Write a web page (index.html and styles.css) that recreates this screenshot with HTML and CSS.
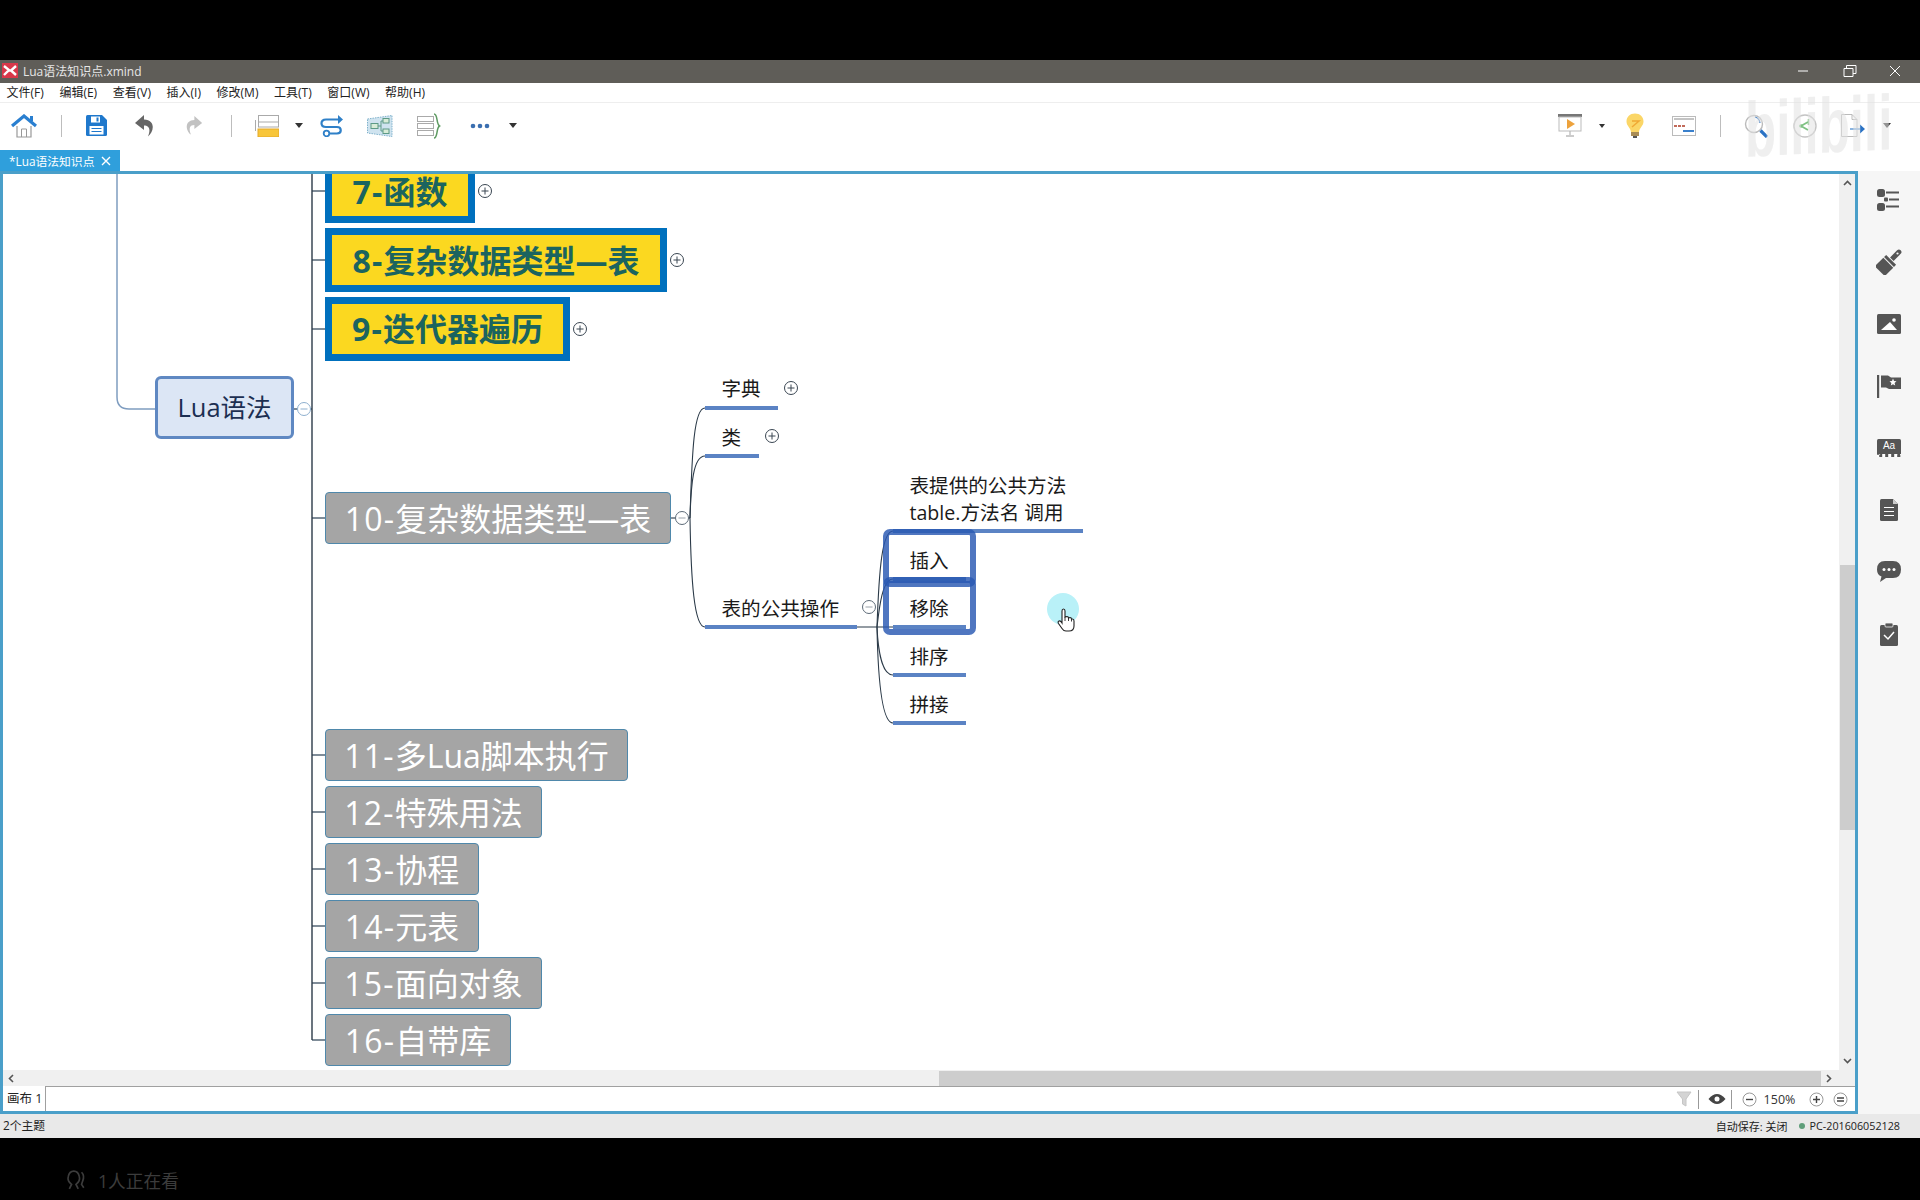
FILE: index.html
```html
<!DOCTYPE html>
<html lang="zh-CN">
<head>
    <meta charset="UTF-8">
    <title>Lua语法知识点.xmind</title>
    <link rel="stylesheet" href="styles.css">
</head>
<body>
    <div class="black-top"></div>
    <div class="window">
        <div class="titlebar">
            <svg class="app-logo" width="16" height="15" viewBox="0 0 16 15"><rect width="16" height="15" fill="#d9384a"/><path d="M2 3 L7 7 L2 12 M14 3 L9 7.5 L14 12 M5 7.5 H11" fill="none" stroke="#fff" stroke-width="2.4"/></svg>
            <span class="title-text">Lua语法知识点.xmind</span>
            <div class="win-controls">
                <svg width="46" height="20" viewBox="0 0 46 20"><path d="M18 10 H28" stroke="#fff" stroke-width="1"/></svg>
                <svg width="46" height="20" viewBox="0 0 46 20"><path d="M18 7.5 H27 V15.5 H18 Z M20.500 7.500 V4.500 H30 V12.500 H27" fill="none" stroke="#fff" stroke-width="1"/></svg>
                <svg width="46" height="20" viewBox="0 0 46 20"><path d="M18 5 L28 15 M28 5 L18 15" stroke="#fff" stroke-width="1"/></svg>
            </div>
        </div>
        <div class="menubar">
            <span>文件(F)</span><span>编辑(E)</span><span>查看(V)</span><span>插入(I)</span><span>修改(M)</span><span>工具(T)</span><span>窗口(W)</span><span>帮助(H)</span>
        </div>
        <div class="toolbar">
            <div class="tool w48"><svg width="26" height="24" viewBox="0 0 26 24"><path d="M6 12 V23 H20 V12" fill="#fff" stroke="#999" stroke-width="1.2"/><path d="M10.500 23 V15 H15.500 V23" fill="none" stroke="#999"/><path d="M1 12 L13 2 L25 12" fill="none" stroke="#2a7fd0" stroke-width="3.2"/><rect x="19" y="2" width="3" height="5" fill="#2a7fd0"/></svg></div>
            <div class="tool-sep sep-a"></div>
            <div class="tool w48 save"><svg width="21" height="21" viewBox="0 0 21 21"><path d="M0 1.500 Q0 0 1.500 0 H16 L21 5 V19.500 Q21 21 19.500 21 H1.500 Q0 21 0 19.500 Z" fill="#1f78cc"/><rect x="5" y="1.500" width="9" height="6" fill="#fff"/><rect x="10.500" y="2.500" width="2" height="4" fill="#1f78cc"/><rect x="3.500" y="11" width="14" height="8.500" fill="#fff"/><path d="M5.500 13.500 H15.500 M5.500 16.500 H15.500" stroke="#1f78cc" stroke-width="1.200"/></svg></div>
            <div class="tool w49"><svg width="20" height="22" viewBox="0 0 20 22"><path d="M9 0 L0 8 L9 15 V10.500 C14 10.500 16 14 13 21.500 C19 17 21 5 9 4.500 Z" fill="#666"/></svg></div>
            <div class="tool w49"><svg width="19" height="19" viewBox="0 0 20 22"><path d="M11 0 L20 8 L11 15 V10.500 C6 10.500 4 14 7 21.500 C1 17 -1 5 11 4.500 Z" fill="#c2c2c2"/></svg></div>
            <div class="tool-sep sep-b"></div>
            <div class="tool w48 topic"><svg width="24" height="22" viewBox="0 0 24 22"><rect x="3.500" y="0.500" width="20" height="10" fill="#fff" stroke="#aaa"/><path d="M0.500 5 V16" stroke="#aaa"/><rect x="3.500" y="7" width="20" height="5" fill="#fff" stroke="#aaa"/><rect x="3" y="14" width="21" height="8" fill="#f8c63a" stroke="#e4a92a"/></svg></div>
            <div class="tool w16"><span class="caret"></span></div>
            <div class="tool w50"><svg width="24" height="22" viewBox="0 0 24 22"><path d="M21 4.500 H6 C0 4.500 0 12 6 12 H17 C22 12 22 18.500 17 18.500 H9" fill="none" stroke="#2f80c8" stroke-width="2.200"/><path d="M18 0 L23 4.500 L18 9 Z" fill="#2f80c8"/><circle cx="6.500" cy="18.500" r="2.800" fill="#fff" stroke="#2f80c8" stroke-width="1.800"/></svg></div>
            <div class="tool w46"><svg width="26" height="22" viewBox="0 0 26 22"><path d="M0.500 4 L25 0.500 V21.500 L0.500 18 Z" fill="#cfe3ef" stroke="#7fb2cc" stroke-dasharray="1.500 1"/><rect x="4" y="8.500" width="7" height="5" fill="#d8ecd8" stroke="#5d9a86"/><rect x="16" y="3.500" width="6" height="4.500" fill="#d8ecd8" stroke="#5d9a86"/><rect x="16" y="14" width="6" height="4.500" fill="#d8ecd8" stroke="#5d9a86"/><path d="M11 11 H14 M14 6 V16 M14 6 H16 M14 16 H16" stroke="#5d9a86" fill="none"/></svg></div>
            <div class="tool w52"><svg width="24" height="26" viewBox="0 0 24 26"><rect x="0.500" y="3.500" width="16" height="5" fill="#fff" stroke="#aaa"/><rect x="0.500" y="10.500" width="16" height="5" fill="#fff" stroke="#aaa"/><rect x="0.500" y="17.500" width="16" height="5" fill="#fff" stroke="#aaa"/><path d="M17 1 C21 1 19 11 22.500 13 C19 15 21 25 17 25" fill="none" stroke="#5e9b62" stroke-width="1.500"/></svg></div>
            <div class="tool w50"><svg width="20" height="6" viewBox="0 0 20 6"><circle cx="3" cy="3" r="2.300" fill="#3b6fb0"/><circle cx="10" cy="3" r="2.300" fill="#3b6fb0"/><circle cx="17" cy="3" r="2.300" fill="#3b6fb0"/></svg></div>
            <div class="tool w16"><span class="caret"></span></div>

            <div class="toolbar-right">
                <div class="tool w46"><svg width="24" height="23" viewBox="0 0 24 23"><rect y="0" width="24" height="3" fill="#777"/><rect x="1" y="3" width="22" height="14" fill="#fff" stroke="#bbb"/><path d="M9 5 L17 10 L9 15 Z" fill="#eda23c"/><path d="M12 17 V21 M8 22 H16" stroke="#bbb" stroke-width="1.300"/></svg></div>
                <div class="tool w18"><span class="caret small"></span></div>
                <div class="tool w48"><svg width="18" height="25" viewBox="0 0 18 25"><path d="M9 0.500 C14 0.500 17.500 4 17.500 8.500 C17.500 13 13.500 14.500 13 19 H5 C4.500 14.500 0.500 13 0.500 8.500 C0.500 4 4 0.500 9 0.500 Z" fill="#fbd667"/><path d="M6 8 H13 L6 14" fill="none" stroke="#f0a934" stroke-width="1.500"/><rect x="5" y="19" width="8" height="4" fill="#a98c55"/><rect x="7" y="23" width="4" height="2" fill="#555"/></svg></div>
                <div class="tool w50"><svg width="24" height="20" viewBox="0 0 24 20"><rect x="0.500" y="0.500" width="23" height="19" fill="#fff" stroke="#bbb"/><path d="M2 3 H22" stroke="#888"/><path d="M2 10 H13" stroke="#c26a5a" stroke-width="2" stroke-dasharray="3 1"/><path d="M11 15 H22" stroke="#3a80cc" stroke-width="2"/></svg></div>
                <div class="tool-sep sep-c"></div>
                <div class="tool w54"><svg width="24" height="24" viewBox="0 0 24 24"><circle cx="10" cy="10" r="8.500" fill="#fff" stroke="#bbb" stroke-width="1.400"/><path d="M11 3 A7 7 0 0 1 16 9" fill="none" stroke="#4c86c8" stroke-width="1.200"/><path d="M16.500 16.500 L23 23" stroke="#2a72c4" stroke-width="3.200"/></svg></div>
                <div class="tool w44"><svg width="24" height="24" viewBox="0 0 24 24"><circle cx="12" cy="12" r="11" fill="#fff" stroke="#c4c4c4" stroke-width="1.400"/><path d="M15 8 L8 12 L15 16" fill="none" stroke="#7fc183" stroke-width="1.800"/><circle cx="8" cy="12" r="1.800" fill="#7fc183"/><path d="M15.500 5 V11" stroke="#7fc183" stroke-width="1.500"/></svg></div>
                <div class="tool w52"><svg width="24" height="23" viewBox="0 0 24 23"><path d="M0.500 0.500 H11 L16 5.500 V22.500 H0.500 Z" fill="#fff" stroke="#bbb"/><path d="M11 0.500 V5.500 H16" fill="none" stroke="#bbb"/><path d="M9 15 H19" stroke="#8ab4e0" stroke-width="2"/><path d="M19 10.500 L24 15 L19 19.500 Z" fill="#2a72c4"/></svg></div>
                <div class="tool w16"><span class="caret"></span></div>
            </div>
        </div>
        <div class="tabbar">
            <div class="tab">
                <span>*Lua语法知识点</span>
                <svg width="10" height="10" viewBox="0 0 10 10"><path d="M1 1 L9 9 M9 1 L1 9" stroke="#fff" stroke-width="1.400"/></svg>
            </div>
        </div>

        <div class="editor">
            <div class="frame">
                <div class="frame-main">
                    <div class="canvas">
                        <div class="map">
                            <svg class="links" width="1920" height="1200" viewBox="0 0 1920 1200">
                                <g fill="none" stroke="#7f9dc0" stroke-width="1.500">
                                    <path d="M117 174 V397 Q117 409 129 409 H155"/>
                                </g>
                                <g fill="none" stroke="#7f8c98" stroke-width="2">
                                    <path d="M312 191 H326 M312 260 H326 M312 329 H326 M312 518 H326 M312 755 H326 M312 812 H326 M312 869 H326 M312 926 H326 M312 983 H326 M312 1040 H326"/>
                                    <path d="M294 409 H312"/>
                                </g>
                                <path d="M312 174 V1040" stroke="#2b3a48" stroke-width="1.400"/>
                                <g fill="none" stroke="#2b3a48" stroke-width="1.100">
                                    <path d="M671 518 H690"/>
                                    <path d="M690 518 C692 450 694 408 705 408"/>
                                    <path d="M690 518 C691 485 693 456 705 456"/>
                                    <path d="M690 518 C691 580 694 627 705 627"/>
                                    <path d="M857 627 H893"/>
                                    <path d="M877 627 C879 570 882 531 893 531"/>
                                    <path d="M877 627 C879 610 882 579 893 579"/>
                                    <path d="M877 627 C878 650 882 675 893 675"/>
                                    <path d="M877 627 C878 680 882 723 893 723"/>
                                </g>
                            </svg>

                            <div class="branch hot n7"><span class="num">7-</span>函数</div>
                            <div class="branch hot n8"><span class="num">8-</span>复杂数据类型—表</div>
                            <div class="branch hot n9"><span class="num">9-</span>迭代器遍历</div>
                            <div class="branch grey n10"><span class="num">10-</span>复杂数据类型—表</div>
                            <div class="branch grey n11"><span class="num">11-</span>多Lua脚本执行</div>
                            <div class="branch grey n12"><span class="num">12-</span>特殊用法</div>
                            <div class="branch grey n13"><span class="num">13-</span>协程</div>
                            <div class="branch grey n14"><span class="num">14-</span>元表</div>
                            <div class="branch grey n15"><span class="num">15-</span>面向对象</div>
                            <div class="branch grey n16"><span class="num">16-</span>自带库</div>

                            <div class="root">Lua语法</div>

                            <div class="leaf l-dict">字典</div>
                            <div class="leaf l-class">类</div>
                            <div class="leaf l-ops">表的公共操作</div>
                            <div class="leaf l-table">表提供的公共方法<br>table.方法名 调用</div>
                            <div class="leaf l-ins">插入</div>
                            <div class="leaf l-del">移除</div>
                            <div class="leaf l-sort">排序</div>
                            <div class="leaf l-join">拼接</div>

                            <div class="sel sel-ins"></div>
                            <div class="sel sel-del"></div>

                            <svg class="toggle t7" width="16" height="16" viewBox="0 0 16 16"><circle cx="8" cy="8" r="6.500" fill="#fff" stroke="#3a4652"/><path d="M4.500 8 H11.500 M8 4.500 V11.500" stroke="#3a4652"/></svg>
                            <svg class="toggle t8" width="16" height="16" viewBox="0 0 16 16"><circle cx="8" cy="8" r="6.500" fill="#fff" stroke="#3a4652"/><path d="M4.500 8 H11.500 M8 4.500 V11.500" stroke="#3a4652"/></svg>
                            <svg class="toggle t9" width="16" height="16" viewBox="0 0 16 16"><circle cx="8" cy="8" r="6.500" fill="#fff" stroke="#3a4652"/><path d="M4.500 8 H11.500 M8 4.500 V11.500" stroke="#3a4652"/></svg>
                            <svg class="toggle t-dict" width="16" height="16" viewBox="0 0 16 16"><circle cx="8" cy="8" r="6.500" fill="#fff" stroke="#3a4652"/><path d="M4.500 8 H11.500 M8 4.500 V11.500" stroke="#3a4652"/></svg>
                            <svg class="toggle t-class" width="16" height="16" viewBox="0 0 16 16"><circle cx="8" cy="8" r="6.500" fill="#fff" stroke="#3a4652"/><path d="M4.500 8 H11.500 M8 4.500 V11.500" stroke="#3a4652"/></svg>
                            <svg class="toggle t-root" width="16" height="16" viewBox="0 0 16 16"><circle cx="8" cy="8" r="6.500" fill="#fff" stroke="#8fb0cf"/><path d="M4.500 8 H11.500" stroke="#8fb0cf"/></svg>
                            <svg class="toggle t10" width="16" height="16" viewBox="0 0 16 16"><circle cx="8" cy="8" r="6.500" fill="#fff" stroke="#5d6b78"/><path d="M4.500 8 H11.500" stroke="#9aa3ab"/></svg>
                            <svg class="toggle t-ops" width="16" height="16" viewBox="0 0 16 16"><circle cx="8" cy="8" r="6.500" fill="#fff" stroke="#5d6b78"/><path d="M4.500 8 H11.500" stroke="#9aa3ab"/></svg>

                            <div class="click-dot"></div>
                            <svg class="hand" width="18" height="24" viewBox="0 0 18 24"><path d="M5 12 V3 Q5 1 6.500 1 Q8 1 8 3 V9 L10 8.500 Q11.500 8.500 11.500 10 L13 9.500 Q14.500 9.500 14.500 11 L15.500 11 Q17 11 17 13 V18 Q17 23 12 23 H9 Q6.500 23 5 20.500 L1.500 15.500 Q0.500 13.500 2 13 Q3.500 12.500 5 15 Z" fill="#fff" stroke="#222" stroke-width="1.100"/><path d="M8 9 V13 M11.500 10 V13 M14.500 11 V13.500" stroke="#222" stroke-width="0.900"/></svg>
                        </div>
                    </div>
                    <div class="vscroll">
                        <div class="arrow"><svg width="9" height="6" viewBox="0 0 9 6"><path d="M1 5 L4.500 1.500 L8 5" fill="none" stroke="#555" stroke-width="1.600"/></svg></div>
                        <div class="vthumb"></div>
                        <div class="arrow arrow-end"><svg width="9" height="6" viewBox="0 0 9 6"><path d="M1 1 L4.500 4.500 L8 1" fill="none" stroke="#555" stroke-width="1.600"/></svg></div>
                    </div>
                </div>
                <div class="hscroll">
                    <div class="arrow-h"><svg width="6" height="9" viewBox="0 0 6 9"><path d="M5 1 L1.500 4.500 L5 8" fill="none" stroke="#555" stroke-width="1.600"/></svg></div>
                    <div class="hthumb"></div>
                    <div class="arrow-h"><svg width="6" height="9" viewBox="0 0 6 9"><path d="M1 1 L4.500 4.500 L1 8" fill="none" stroke="#555" stroke-width="1.600"/></svg></div>
                </div>
                <div class="sheetbar">
                    <div class="sheet-tab">画布 1</div>
                    <div class="sheet-rest">
                        <div class="ctl w28"><svg width="16" height="16" viewBox="0 0 16 16"><path d="M1 1 H15 L10 8 V15 L6.500 13 V8 Z" fill="#d4d4d4" stroke="#c6c6c6"/></svg></div>
                        <div class="ctl-sep"></div>
                        <div class="ctl w28 after-sep"><svg width="18" height="12" viewBox="0 0 18 12"><path d="M0.500 6 Q9 -4 17.500 6 Q9 16 0.500 6 Z" fill="#444"/><circle cx="9" cy="6" r="2.500" fill="#fff"/></svg></div>
                        <div class="ctl-sep"></div>
                        <div class="ctl w24 after-sep-wide"><svg width="15" height="15" viewBox="0 0 15 15"><circle cx="7.500" cy="7.500" r="6.500" fill="#fff" stroke="#999"/><path d="M4 7.500 H11" stroke="#444" stroke-width="1.400"/></svg></div>
                        <div class="zoom-text">150%</div>
                        <div class="ctl w24"><svg width="15" height="15" viewBox="0 0 15 15"><circle cx="7.500" cy="7.500" r="6.500" fill="#fff" stroke="#999"/><path d="M4 7.500 H11 M7.500 4 V11" stroke="#444" stroke-width="1.400"/></svg></div>
                        <div class="ctl w24"><svg width="15" height="15" viewBox="0 0 15 15"><circle cx="7.500" cy="7.500" r="6.500" fill="#fff" stroke="#999"/><path d="M4 6 H11 M4 9 H11" stroke="#444" stroke-width="1.400"/></svg></div>
                    </div>
                </div>
            </div>
            <div class="sidepanel">
                <div class="side-item"><svg width="24" height="22" viewBox="0 0 24 22"><g fill="#555"><rect x="0" y="0" width="8" height="8" rx="2.500"/><rect x="0" y="14" width="8" height="8" rx="2.500"/><rect x="7" y="8.500" width="4" height="4" rx="1"/></g><path d="M9 3.500 H22 M12 10.500 H22 M9 17.500 H22" stroke="#555" stroke-width="1.800"/></svg></div>
                <div class="side-item"><svg width="26" height="26" viewBox="0 0 26 26"><g transform="rotate(45 13 13)" fill="#555"><path d="M10.500 -1 Q10.500 -3.500 13 -3.500 Q15.500 -3.500 15.500 -1 V9 H10.500 Z"/><rect x="6" y="10" width="14" height="3"/><path d="M6 14 H20 V26 H6 Z"/></g><circle cx="21.500" cy="4.500" r="1.100" fill="#f6f6f6"/></svg></div>
                <div class="side-item"><svg width="24" height="20" viewBox="0 0 24 20"><rect width="24" height="20" rx="1.500" fill="#555"/><path d="M4 16 L13 8 L20 16 Z" fill="#fff"/><circle cx="17" cy="6" r="1.800" fill="#fff"/></svg></div>
                <div class="side-item"><svg width="24" height="23" viewBox="0 0 24 23"><rect x="0" y="0" width="2.200" height="23" fill="#555"/><path d="M4 0.500 H11 L14 2.500 H24 V14 H12 L9 12.500 H4 Z" fill="#555"/><path d="M16 3.500 L17 6 L19.500 6.300 L17.600 8 L18.200 10.500 L16 9.200 L13.800 10.500 L14.400 8 L12.500 6.300 L15 6 Z" fill="#fff"/></svg></div>
                <div class="side-item"><div class="aa-icon"><span>Aa</span></div></div>
                <div class="side-item"><svg width="18" height="22" viewBox="0 0 18 22"><path d="M1.500 0 H13 L18 5 V20.500 Q18 22 16.500 22 H1.500 Q0 22 0 20.500 V1.500 Q0 0 1.500 0 Z" fill="#555"/><path d="M13 0 V5 H18 Z" fill="#ccc"/><path d="M4 8.500 H14 M4 12.500 H14 M4 16.500 H14" stroke="#fff" stroke-width="1.200"/></svg></div>
                <div class="side-item"><svg width="24" height="22" viewBox="0 0 24 22"><path d="M8 0 H16 Q24 0 24 8.500 Q24 17 16 17 H9 L3 21 L4.500 15.500 Q0 14 0 8.500 Q0 0 8 0 Z" fill="#555"/><circle cx="7" cy="8.500" r="1.500" fill="#fff"/><circle cx="12" cy="8.500" r="1.500" fill="#fff"/><circle cx="17" cy="8.500" r="1.500" fill="#fff"/></svg></div>
                <div class="side-item"><svg width="18" height="23" viewBox="0 0 18 23"><rect x="0" y="2" width="18" height="21" rx="1.500" fill="#555"/><rect x="5" y="0" width="8" height="4" rx="1" fill="#555" stroke="#f6f6f6" stroke-width="0.800"/><path d="M4 12 L8 16 L14 9" fill="none" stroke="#fff" stroke-width="1.500"/></svg></div>
            </div>
        </div>

        <div class="statusbar">
            <span class="topic-count">2个主题</span>
            <div class="status-right">
                <span>自动保存: 关闭</span>
                <i class="status-dot"></i>
                <span class="pc-name">PC-201606052128</span>
            </div>
        </div>
    </div>
    <div class="black-bottom">
        <svg width="24" height="20" viewBox="0 0 20 18"><path d="M4 17 L6 13 Q2 10 3 6 Q4 1 8 1 Q12 1 13 6 Q14 10 10 13 L12 17 M15 2 Q18 5 16 10 L15 13 L17 16" fill="none" stroke="#3c3c3c" stroke-width="1.500"/></svg>
        <span>1人正在看</span>
    </div>
    <div class="watermark">bilibili</div>
</body>
</html>
```

FILE: styles.css
```css
* {
    box-sizing: border-box;
}
body {
    margin: 0;
    width: 1920px;
    height: 1200px;
    overflow: hidden;
    background: #000;
    font-family: "Open Sans", "Noto Sans CJK SC", sans-serif;
    font-size: 12px;
    color: #222;
    display: flex;
    flex-direction: column;
    position: relative;
}
svg {
    display: block;
    flex: none;
}
.black-top {
    height: 60px;
}
.window {
    height: 1078px;
    background: #fff;
    display: flex;
    flex-direction: column;
}

/* title bar */
.titlebar {
    height: 23px;
    background: #5f5d58;
    display: flex;
    align-items: center;
    padding: 0 0 2px 2px;
}
.title-text {
    margin-left: 5px;
    color: #e6e6e6;
    font-size: 12px;
}
.win-controls {
    margin-left: auto;
    margin-right: 2px;
    display: flex;
}

/* menu */
.menubar {
    height: 20px;
    border-bottom: 1px solid #eee;
    display: flex;
    align-items: center;
    padding: 0 0 2px 0;
    font-size: 12px;
    color: #222;
}
.menubar span {
    padding: 0 7.800px;
    white-space: nowrap;
}
.menubar span:first-child {
    margin-left: -1.300px;
}

/* toolbar */
.toolbar {
    height: 47px;
    display: flex;
    align-items: center;
    padding-bottom: 2px;
}
.toolbar-right {
    margin-left: auto;
    padding-right: 25px;
    display: flex;
    align-items: center;
}
.tool {
    display: flex;
    justify-content: center;
    align-items: center;
}
.w16 { width: 16px; }
.w18 { width: 18px; }
.w44 { width: 44px; }
.w46 { width: 46px; }
.w48 { width: 48px; }
.w49 { width: 49px; }
.w50 { width: 50px; }
.w52 { width: 52px; }
.w54 { width: 54px; }
.save { margin-left: 10px; }
.topic { margin-left: 11px; }
.tool-sep {
    width: 1px;
    height: 22px;
    background: #bdbdbd;
}
.sep-a { margin-left: 13px; }
.sep-b { margin-left: 13px; }
.sep-c { margin-left: 11px; margin-right: 8px; }
.caret {
    width: 0;
    height: 0;
    border-left: 4.500px solid transparent;
    border-right: 4.500px solid transparent;
    border-top: 5px solid #333;
}
.caret.small {
    border-left-width: 3.500px;
    border-right-width: 3.500px;
    border-top-width: 4px;
}

/* tabs */
.tabbar {
    height: 21px;
    display: flex;
}
.tab {
    width: 120px;
    background: #2f9fdc;
    color: #fff;
    display: flex;
    align-items: center;
    padding-left: 9px;
    gap: 7px;
    white-space: nowrap;
    font-size: 11.800px;
}

/* editor frame */
.editor {
    height: 943px;
    display: flex;
}
.frame {
    width: 1858px;
    border: 3px solid #4a9fc9;
    display: flex;
    flex-direction: column;
}
.frame-main {
    flex: 1;
    display: flex;
    min-height: 0;
}
.canvas {
    flex: 1;
    position: relative;
    background: #fff;
}
/* the map is laid out in window coordinates */
.map {
    position: absolute;
    left: -3px;
    top: -174px;
    width: 1920px;
    height: 1200px;
}
.links {
    position: absolute;
    left: 0;
    top: 0;
}
.branch {
    position: absolute;
    left: 325px;
    display: flex;
    justify-content: center;
    align-items: center;
    white-space: nowrap;
    font-size: 32px;
    line-height: 1;
    padding-top: 1.500px;
}
.num {
    letter-spacing: 1.200px;
}
.hot {
    background: #fbd820;
    border: 7px solid #0070bd;
    color: #1b645f;
    font-weight: 700;
}
.grey {
    background: #a5a5a5;
    border: 1px solid #4f88ab;
    border-radius: 4px;
    color: #fff;
    height: 52px;
}
/* topic 7 is scrolled partly out of view, its top edge is under the frame */
.n7 { top: 174px; width: 150px; height: 49px; border-top: 0; padding-top: 0; padding-bottom: 7px; }
.n8 { top: 228px; width: 342px; height: 64px; }
.n9 { top: 297px; width: 245px; height: 64px; padding-top: 0; padding-bottom: 1px; }
.n10 { top: 492px; width: 346px; }
.n11 { top: 729px; width: 303px; }
.n12 { top: 786px; width: 217px; }
.n13 { top: 843px; width: 154px; }
.n14 { top: 900px; width: 154px; }
.n15 { top: 957px; width: 217px; }
.n16 { top: 1014px; width: 186px; }

.root {
    position: absolute;
    left: 155px;
    top: 376px;
    width: 139px;
    height: 63px;
    background: #dce6f5;
    border: 3px solid #5f88c2;
    border-radius: 6px;
    color: #1c2f52;
    font-size: 25.500px;
    line-height: 1;
    display: flex;
    justify-content: center;
    align-items: center;
}
.leaf {
    position: absolute;
    border-bottom: 4px solid #5b83c4;
    padding: 2px 0 0 16.500px;
    font-size: 19.600px;
    line-height: 27px;
    color: #1a1a1a;
    display: flex;
    align-items: center;
    white-space: nowrap;
}
.l-dict { left: 705px; top: 370px; width: 73px; height: 40px; padding-top: 0; }
.l-class { left: 705px; top: 418px; width: 54px; height: 40px; }
.l-ops { left: 705px; top: 589px; width: 152px; height: 40px; }
.l-table { left: 893px; top: 472px; width: 190px; height: 61px; display: block; padding-top: 0; }
.l-ins { left: 893px; top: 541px; width: 73px; height: 40px; }
.l-del { left: 893px; top: 589px; width: 73px; height: 40px; }
.l-sort { left: 893px; top: 637px; width: 73px; height: 40px; }
.l-join { left: 893px; top: 685px; width: 73px; height: 40px; }

.sel {
    position: absolute;
    left: 883px;
    width: 93px;
    height: 58px;
    border: 6px solid rgba(40, 88, 178, 0.82);
    border-radius: 7px;
}
.sel-ins { top: 529px; }
.sel-del { top: 577px; }

.toggle {
    position: absolute;
}
.t7 { left: 477px; top: 183px; }
.t8 { left: 669px; top: 252px; }
.t9 { left: 572px; top: 321px; }
.t-dict { left: 783px; top: 380px; }
.t-class { left: 764px; top: 428px; }
.t-root { left: 296px; top: 401px; }
.t10 { left: 674px; top: 510px; }
.t-ops { left: 861px; top: 599px; }

.click-dot {
    position: absolute;
    left: 1047px;
    top: 593px;
    width: 32px;
    height: 32px;
    border-radius: 50%;
    background: #b9f1f8;
}
.hand {
    position: absolute;
    left: 1057px;
    top: 608px;
}

/* scrollbars */
.vscroll {
    width: 16px;
    background: #f0f0f0;
    display: flex;
    flex-direction: column;
    align-items: center;
}
.arrow {
    height: 18px;
    display: flex;
    align-items: center;
    justify-content: center;
}
.arrow-end {
    margin-top: auto;
}
.vthumb {
    width: 15px;
    height: 265px;
    margin-top: 373px;
    background: #cdcdcd;
}
.hscroll {
    height: 16px;
    background: #f0f0f0;
    display: flex;
    align-items: center;
}
.arrow-h {
    width: 16px;
    display: flex;
    justify-content: center;
}
.hthumb {
    width: 882px;
    height: 15px;
    margin-left: 920px;
    background: #cdcdcd;
}

/* sheet bar */
.sheetbar {
    height: 25px;
    display: flex;
    background: #fff;
}
.sheet-tab {
    width: 42px;
    padding: 0 0 2px 4px;
    display: flex;
    align-items: center;
    white-space: nowrap;
    font-size: 12.500px;
    color: #222;
}
.sheet-rest {
    flex: 1;
    border-top: 1px solid #a0a0a0;
    border-left: 1px solid #a0a0a0;
    display: flex;
    justify-content: flex-end;
    align-items: center;
    padding-right: 3px;
}
.ctl {
    display: flex;
    justify-content: center;
    align-items: center;
}
.w24 { width: 24px; }
.w28 { width: 28px; }
.ctl-sep {
    width: 1px;
    height: 19px;
    background: #999;
}
.after-sep { margin-left: 4px; }
.after-sep-wide { margin-left: 5px; }
.zoom-text {
    width: 43px;
    padding-right: 6px;
    text-align: center;
    font-size: 12.500px;
    color: #333;
}

/* right side panel */
.sidepanel {
    flex: 1;
    background: #f6f6f6;
    display: flex;
    flex-direction: column;
    align-items: center;
    padding-top: 9px;
    gap: 22px;
}
.side-item {
    height: 40px;
    display: flex;
    align-items: center;
    justify-content: center;
}
.aa-icon {
    width: 24px;
    height: 18px;
    background: #555;
    border-radius: 1.500px;
    color: #fff;
    font-size: 10px;
    line-height: 14px;
    text-align: center;
    border-bottom: 3px dotted #fff;
    font-family: "Liberation Sans", sans-serif;
}

/* status bar */
.statusbar {
    height: 24px;
    background: #e9e9e9;
    display: flex;
    align-items: center;
    padding: 0 20px 0 3px;
    font-size: 11.800px;
    color: #222;
}
.topic-count {
    margin-bottom: 3px;
}
.status-right {
    margin-left: auto;
    display: flex;
    align-items: center;
    font-size: 11px;
}
.pc-name {
    font-size: 10.750px;
}
.status-dot {
    width: 6px;
    height: 6px;
    margin: 0 5px 0 11px;
    border-radius: 50%;
    background: #5f9e7a;
}
.black-bottom {
    height: 62px;
    padding: 22px 0 0 64px;
    display: flex;
    align-items: center;
    gap: 10px;
    color: #3c3c3c;
    font-size: 17.700px;
}
.watermark {
    position: absolute;
    left: 1745px;
    top: 92px;
    font-family: "Liberation Sans", sans-serif;
    font-weight: 700;
    font-size: 60px;
    line-height: 60px;
    color: rgba(226, 226, 226, 0.55);
    transform: scale(0.85, 1.3) skewY(-2deg);
    transform-origin: left top;
    pointer-events: none;
}
```
